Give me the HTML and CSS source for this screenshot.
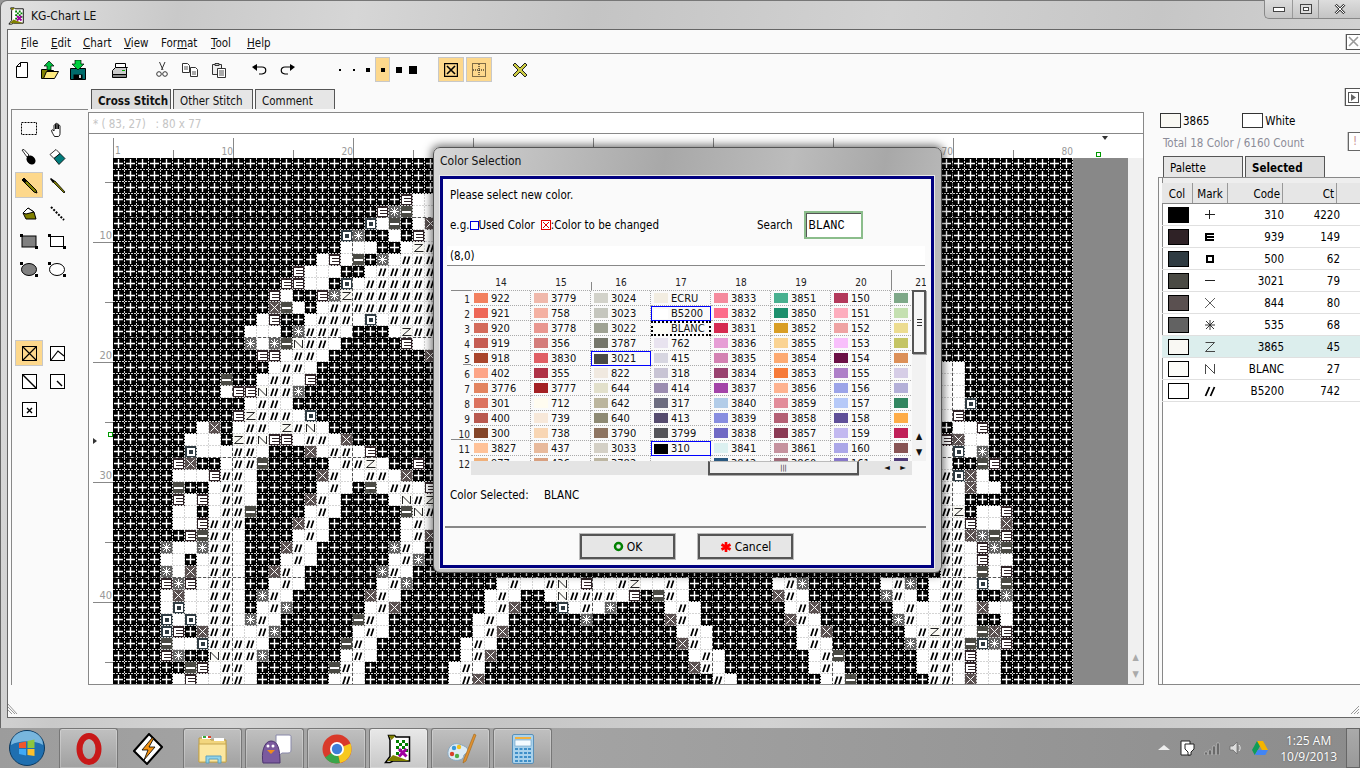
FILE: index.html
```html
<!DOCTYPE html>
<html lang="en">
<head>
<meta charset="utf-8">
<title>KG-Chart LE</title>
<link rel="stylesheet" href="styles.css">
</head>
<body>
<svg class="defs" width="0" height="0" aria-hidden="true">
  <symbol id="kg" viewBox="0 0 20 20">
    <path d="M3 1h4l1 1h9v16H6l-2 1H1l3-4V4z" fill="#fff" stroke="#000"/>
    <path d="M2 18l4-4 11 4H6z" fill="#808000"/>
    <path d="M3 1h4v1L5 4z" fill="#808000"/>
    <path d="M8 4h2v2H8zM12 4h2v2h-2zM10 6h2v2h-2zM14 6h2v2h-2zM8 8h2v2H8zM12 8h2v2h-2zM10 10h2v2h-2zM14 10h2v2h-2zM8 12h2v2H8z" fill="#008000"/>
    <path d="M10 10l5 5M15 10l-5 5" stroke="#a000a0" stroke-width="2"/>
  </symbol>
</svg>

<div class="window">
  <div class="titlebar">
    <svg class="app-icon" width="18" height="18"><use href="#kg"/></svg>
    <span class="app-title">KG-Chart LE</span>
    <div class="caption">
      <span class="cap-btn cap-min"><svg width="12" height="8"><rect x=".5" y="2.5" width="11" height="4" fill="#fff" stroke="#444"/></svg></span>
      <span class="cap-btn cap-max"><svg width="12" height="10"><rect x=".5" y=".5" width="11" height="9" fill="#ddd" stroke="#444"/><rect x="3.5" y="3.5" width="5" height="3" fill="#fff" stroke="#444"/></svg></span>
      <span class="cap-btn cap-close"><svg width="12" height="10"><path d="M1.5 .5l9 9M10.5 .5l-9 9" stroke="#444" stroke-width="2.6"/><path d="M1.5 .5l9 9M10.5 .5l-9 9" stroke="#fff" stroke-width="1"/></svg></span>
    </div>
  </div>

  <div class="client">
    <div class="menubar">
      <span class="menu-item m-file"><u>F</u>ile</span>
      <span class="menu-item m-edit"><u>E</u>dit</span>
      <span class="menu-item m-chart"><u>C</u>hart</span>
      <span class="menu-item m-view"><u>V</u>iew</span>
      <span class="menu-item m-format">For<u>m</u>at</span>
      <span class="menu-item m-tool"><u>T</u>ool</span>
      <span class="menu-item"><u>H</u>elp</span>
      <span class="menu-close"><svg width="11" height="11"><path d="M1 1l9 9M10 1l-9 9" stroke="#999" stroke-width="1.6"/></svg></span>
    </div>

    <div class="toolbar">
      <span class="tb"><svg width="16" height="18"><path d="M2.500 5.500l4-4h7v15h-11zM2.500 5.500h4v-4" fill="#fff" stroke="#000"/></svg></span>
      <span class="tb"><svg width="20" height="20"><path d="M1.500 9.500h5l1 1h6v8h-12z" fill="#808000" stroke="#000"/><path d="M3.500 18.500l3-7h12l-4 7z" fill="#ffeb80" stroke="#000"/><path d="M9 1l5 5h-3v4H7V6H4z" fill="#00c040" stroke="#000" stroke-width=".7"/></svg></span>
      <span class="tb"><svg width="16" height="20"><path d="M.5 8.500h15v11H.5z" fill="#006b6b" stroke="#000"/><path d="M3.500 14.500h9v5h-9z" fill="#000"/><path d="M9 15h2v3H9z" fill="#ccc"/><path d="M5 0h6v4h3l-6 6-6-6h3z" fill="#00d040" stroke="#000" stroke-width=".7"/></svg></span>
      <span class="tb tb-sp14"><svg width="18" height="16"><path d="M4.500 1.500h10v4h-10z" fill="#fff" stroke="#000"/><path d="M4.500 5.500h12l-1 1v6h-14v-4z" fill="#ccc" stroke="#000"/><path d="M1.500 12.500h14v3h-14z" fill="#888" stroke="#000"/><path d="M11 8.500h3" stroke="#0a0"/></svg></span>
      <span class="tb tb-sp14"><svg width="12" height="17"><path d="M3.500 1l3.500 8M9 1l-3.500 8" stroke="#333" fill="none"/><circle cx="3" cy="13" r="2.300" fill="#fff" stroke="#333"/><circle cx="9" cy="13" r="2.300" fill="#fff" stroke="#333"/></svg></span>
      <span class="tb"><svg width="18" height="14"><path d="M1.500 .5h5l2 2v7h-7z" fill="#fff" stroke="#333"/><path d="M9.500 4.500h5l2 2v7h-7z" fill="#fff" stroke="#333"/><path d="M3 4h4M3 6h4M11 9h4M11 11h4" stroke="#555"/></svg></span>
      <span class="tb"><svg width="15" height="16"><path d="M1.500 2.500h9v10h-9z" fill="#eee" stroke="#333"/><path d="M4 1.500h4v2H4z" fill="#ccc" stroke="#333"/><path d="M6.500 6.500h8v9h-8z" fill="#fff" stroke="#333"/><path d="M8 9h5M8 11h5M8 13h5" stroke="#555"/></svg></span>
      <span class="tb tb-sp13"><svg width="15" height="11"><path d="M4 3h6c5 0 5 6 0 7H7" fill="none" stroke="#000" stroke-width="1.200"/><path d="M5 0v7L0 3z" fill="#000"/></svg></span>
      <span class="tb"><svg width="15" height="11"><path d="M11 3H5c-5 0-5 6 0 7h3" fill="none" stroke="#000" stroke-width="1.200"/><path d="M10 0v7l5-4z" fill="#000"/></svg></span>
      <span class="size size-first"><i class="dot d1"></i></span>
      <span class="size"><i class="dot d1"></i></span>
      <span class="size"><i class="dot d2"></i></span>
      <span class="size size-on"><i class="dot d3"></i></span>
      <span class="size size-gap"><i class="dot d4"></i></span>
      <span class="size"><i class="dot d5"></i></span>
      <span class="toggle toggle-first"><svg width="14" height="14"><rect x=".5" y=".5" width="13" height="13" fill="none" stroke="#000" stroke-width="1.400"/><path d="M3 3l8 8M11 3l-8 8" stroke="#000" stroke-width="1.600"/></svg></span>
      <span class="toggle"><svg width="14" height="14"><rect x=".5" y=".5" width="13" height="13" fill="none" stroke="#000" stroke-dasharray="1 1"/><path d="M7 1v12M1 7h12" stroke="#000" stroke-dasharray="1 1"/></svg></span>
      <span class="tb tb-sp14"><svg width="16" height="16"><path d="M3 1l5 5 5-5 2 2-5 5 5 5-2 2-5-5-5 5-2-2 5-5-5-5z" fill="#cccc44" stroke="#222"/></svg></span>
    </div>

    <div class="tabs-row">
      <span class="tab tab-on">Cross Stitch</span>
      <span class="tab">Other Stitch</span>
      <span class="tab">Comment</span>
      <span class="pane-btn"><svg width="11" height="11"><rect x=".5" y=".5" width="10" height="10" fill="#fff" stroke="#555"/><path d="M3 2l5 3.500-5 3.500z" fill="#666"/></svg></span>
    </div>

    <div class="main">
      <aside class="tools">
        <span class="tool"><svg width="17" height="14"><rect x=".5" y=".5" width="15" height="12" fill="none" stroke="#000" stroke-dasharray="2 1"/></svg></span>
        <span class="tool"><svg width="12" height="15"><path d="M3.500 14.500C2 12 1 10.500 .6 8.800c-.2-1 1-1.500 1.800-.5L3 9V3.500c0-1 1.500-1 1.500 0V7 2c0-1 1.500-1 1.500 0v5-4.500c0-1 1.500-1 1.500 0V7 4c0-1 1.500-1 1.500 0v7.500c0 2-1 3-2 3z" fill="#fff" stroke="#000" stroke-width=".9"/></svg></span>
        <span class="tool"><svg width="16" height="17"><path d="M1 1l2-0.500L8 6l-2 2z" fill="#fff" stroke="#000" stroke-width=".8"/><ellipse cx="10" cy="11" rx="4" ry="5" transform="rotate(-45 10 11)" fill="#000"/></svg></span>
        <span class="tool"><svg width="17" height="17"><path d="M1 5.500l6-5 4 4-6 5z" fill="#fff" stroke="#000" stroke-width=".8"/><path d="M5 9.500l6-5 5 5-6 6z" fill="#007b7b" stroke="#000" stroke-width=".8"/></svg></span>
        <span class="tool tool-on"><svg width="17" height="17"><path d="M1 3l2-2 12 12 1 3-3-1z" fill="#808000" stroke="#000"/><path d="M1 3l2-2 3 3-2 2z" fill="#000"/></svg></span>
        <span class="tool"><svg width="17" height="17"><path d="M1 2l1-1 4 3-2 2z" fill="#000"/><path d="M4 5l2-1 10 11-1 1z" fill="#808000" stroke="#000" stroke-width=".8"/></svg></span>
        <span class="tool"><svg width="17" height="15"><path d="M2 7l5-5 6 4 2 7H5z" fill="#808000" stroke="#000"/><path d="M2 7l5-5 6 4-8 2z" fill="#fff" stroke="#000"/></svg></span>
        <span class="tool"><svg width="17" height="17"><path d="M2 2l13 13" stroke="#000" stroke-width="2" stroke-dasharray="2 1.400"/></svg></span>
        <span class="tool"><svg width="18" height="15"><rect x="2" y="2" width="14" height="11" fill="#808080" stroke="#000"/><path d="M0 0h3v3H0zM15 12h3v3h-3z" fill="#000"/></svg></span>
        <span class="tool"><svg width="18" height="15"><rect x="2.500" y="2.500" width="13" height="10" fill="#fff" stroke="#000"/><path d="M0 0h3v3H0zM15 12h3v3h-3z" fill="#000"/></svg></span>
        <span class="tool"><svg width="18" height="15"><ellipse cx="9" cy="7.500" rx="7.500" ry="6" fill="#808080" stroke="#000"/><path d="M0 0h3v3H0zM15 12h3v3h-3z" fill="#000"/></svg></span>
        <span class="tool"><svg width="18" height="15"><ellipse cx="9" cy="7.500" rx="7.500" ry="6" fill="#fff" stroke="#000"/><path d="M0 0h3v3H0zM15 12h3v3h-3z" fill="#000"/></svg></span>
        <span class="tool-gap"></span>
        <span class="tool tool-on tool-on-wide"><svg width="15" height="15"><rect x=".5" y=".5" width="14" height="14" fill="none" stroke="#000"/><path d="M1 1l13 13M14 1L1 14" stroke="#000" stroke-width="1.200"/></svg></span>
        <span class="tool"><svg width="15" height="15"><rect x=".5" y=".5" width="14" height="14" fill="#fff" stroke="#000"/><path d="M1 14l7-9 6 5" fill="none" stroke="#000" stroke-width="1.200"/></svg></span>
        <span class="tool"><svg width="15" height="15"><rect x=".5" y=".5" width="14" height="14" fill="#fff" stroke="#000"/><path d="M1 1l13 13" stroke="#000" stroke-width="1.400"/></svg></span>
        <span class="tool"><svg width="15" height="15"><rect x=".5" y=".5" width="14" height="14" fill="#fff" stroke="#000"/><path d="M7 7l5 5" stroke="#000" stroke-width="1.400"/></svg></span>
        <span class="tool"><svg width="15" height="15"><rect x=".5" y=".5" width="14" height="14" fill="#fff" stroke="#000"/><path d="M5 6l5 5M10 6l-5 5" stroke="#000" stroke-width="1.400"/></svg></span>
      </aside>

      <section class="chart-panel">
        <div class="coords">* ( 83, 27)&nbsp;&nbsp; : 80 x 77</div>
        <div class="chart-grid">
          <div class="corner"></div>
          <div class="col-ruler">
            <span class="col-first">1</span>
            <span class="col-label">10</span><span class="col-label">20</span><span class="col-label col-hidden"></span><span class="col-label col-hidden"></span><span class="col-label col-hidden"></span><span class="col-label col-hidden"></span><span class="col-label">70</span><span class="col-label">80</span>
            <i class="mark-tri-top"></i>
            <i class="mark-green mark-green-top"></i>
          </div>
          <div class="top-filler"></div>
          <div class="row-ruler">
            <span class="row-label row-label-first">10</span><span class="row-label">20</span><span class="row-label">30</span><span class="row-label">40</span>
            <i class="mark-tri-left"></i>
            <i class="mark-green mark-green-left"></i>
          </div>
          <svg id="stitches" class="stitches" width="960" height="526"></svg>
          <div class="chart-gutter"></div>
          <div class="chart-vscroll">
            <span class="scroll-arrow">▲</span>
            <span class="scroll-arrow">▼</span>
          </div>
        </div>
      </section>

      <aside class="side">
        <div class="legend">
          <span class="legend-swatch legend-a"></span><span class="legend-text">3865</span>
          <span class="legend-swatch legend-b"></span><span class="legend-text">White</span>
        </div>
        <div class="total-row">
          <span class="total">Total 18 Color / 6160 Count</span>
          <span class="bang">!</span>
        </div>
        <div class="side-tabs">
          <span class="side-tab">Palette</span>
          <span class="side-tab side-tab-on">Selected</span>
        </div>
        <div class="list-frame">
          <div class="list-head">
            <span class="lh lh-col">Col</span>
            <span class="lh lh-mark">Mark</span>
            <span class="lh lh-code">Code</span>
            <span class="lh lh-ct">Ct</span>
          </div>
          <div class="list-row"><span class="lc-sw"><i class="sw" style="background:#000"></i></span><span class="lc-mark"><svg width="12" height="12"><path d="M1 5.500h10M5.500 1v9" stroke="#222"/></svg></span><span class="lc-code">310</span><span class="lc-ct">4220</span></div>
          <div class="list-row"><span class="lc-sw"><i class="sw" style="background:#2f2226"></i></span><span class="lc-mark"><svg width="12" height="12"><path d="M1 2h9v2H3v1h7v2H3v1h7v2H1z" fill="#000"/></svg></span><span class="lc-code">939</span><span class="lc-ct">149</span></div>
          <div class="list-row"><span class="lc-sw"><i class="sw" style="background:#2f3b42"></i></span><span class="lc-mark"><svg width="12" height="12"><path d="M2 2h8v8H2zM4 4v4h4V4z" fill="#000" fill-rule="evenodd"/></svg></span><span class="lc-code">500</span><span class="lc-ct">62</span></div>
          <div class="list-row"><span class="lc-sw"><i class="sw" style="background:#4a4a44"></i></span><span class="lc-mark"><svg width="12" height="12"><path d="M1 5.500h10" stroke="#222"/></svg></span><span class="lc-code">3021</span><span class="lc-ct">79</span></div>
          <div class="list-row"><span class="lc-sw"><i class="sw" style="background:#5a5050"></i></span><span class="lc-mark"><svg width="12" height="12"><path d="M1 1l10 10M11 1L1 11" stroke="#333" stroke-width=".8"/></svg></span><span class="lc-code">844</span><span class="lc-ct">80</span></div>
          <div class="list-row"><span class="lc-sw"><i class="sw" style="background:#626262"></i></span><span class="lc-mark"><svg width="12" height="12"><path d="M1 6h10M6 1v10M2 2l8 8M10 2l-8 8" stroke="#222" stroke-width=".9"/></svg></span><span class="lc-code">535</span><span class="lc-ct">68</span></div>
          <div class="list-row list-row-on"><span class="lc-sw"><i class="sw" style="background:#f9f8f3"></i></span><span class="lc-mark"><svg width="12" height="12"><path d="M1.500 1.500h9l-9 9h9.500" fill="none" stroke="#333" stroke-width=".9"/></svg></span><span class="lc-code">3865</span><span class="lc-ct">45</span></div>
          <div class="list-row"><span class="lc-sw"><i class="sw" style="background:#fcfcf8"></i></span><span class="lc-mark"><svg width="12" height="12"><path d="M1.500 11V1.500l9 9V1" fill="none" stroke="#333" stroke-width=".9"/></svg></span><span class="lc-code">BLANC</span><span class="lc-ct">27</span></div>
          <div class="list-row"><span class="lc-sw"><i class="sw" style="background:#fff"></i></span><span class="lc-mark"><svg width="12" height="12"><path d="M1.500 11l4-9M6.500 11l4-9" stroke="#000" stroke-width="1.800"/></svg></span><span class="lc-code">B5200</span><span class="lc-ct">742</span></div>
        </div>
      </aside>
    </div>

    <div class="statusbar">
      <svg class="grip" width="10" height="12"><path d="M0 1l9 10M0 4l7 7M0 7l4 4" stroke="#999"/></svg>
      <svg class="grip" width="9" height="9"><path d="M8 0L0 8M8 3L3 8M8 6L6 8" stroke="#999"/></svg>
    </div>
  </div>
</div>

<div class="dialog">
  <div class="dialog-title">Color Selection</div>
  <div class="dialog-body">
    <div class="msg">Please select new color.</div>
    <div class="eg-row">
      <span>e.g.</span><i class="eg-blue"></i><span>Used Color</span>
      <svg class="eg-red" width="10" height="10"><rect x=".5" y=".5" width="9" height="9" fill="#fff" stroke="#e00000"/><path d="M2 2l6 6M8 2l-6 6" stroke="#e00000"/></svg>
      <span>:Color to be changed</span>
      <span class="search-label">Search</span>
      <span class="search-input">BLANC</span>
    </div>
    <div class="coord-strip">(8,0)</div>
    <div class="pal-head" id="palHead"></div>
    <div class="pal-wrap">
      <div class="pal-rows" id="palRows"></div>
      <div class="pal-view">
        <div class="pal-cells" id="palCells"></div>
        <div class="hscroll">
          <span class="hthumb"><b>|||</b></span>
          <span class="harrow">◄</span><span class="harrow">►</span>
        </div>
      </div>
      <div class="vscroll">
        <span class="vthumb"><i></i><i></i><i></i></span>
        <span class="varrow">▲</span><span class="varrow">▼</span>
      </div>
    </div>
    <div class="selected-row"><span class="sel-label">Color Selected:</span><span>BLANC</span></div>
    <div class="button-row">
      <span class="dlg-btn"><svg width="11" height="11"><circle cx="5.500" cy="5.500" r="3.500" fill="none" stroke="#008000" stroke-width="2.500"/></svg>OK</span>
      <span class="dlg-btn dlg-btn-cancel"><svg width="12" height="12"><path d="M6 1v10M1.500 3.500l9 5M10.500 3.500l-9 5" stroke="#f00" stroke-width="2.600"/></svg>Cancel</span>
    </div>
  </div>
</div>

<div class="taskbar">
  <span class="start"><svg width="38" height="38" viewBox="0 0 38 38">
    <circle cx="19" cy="19" r="17.500" fill="#1f6fb0" stroke="#0c3a60"/>
    <path d="M3 16a16 14 0 0 1 32 0c-8-5-24-5-32 0z" fill="#8fc8ea" opacity=".8"/>
    <path d="M11 14l7-1.500v6.500h-7z" fill="#f0562c"/><path d="M19.500 12l7 -1.500 0 8.500h-7z" fill="#8cc63f"/>
    <path d="M11 20h7v6.500l-7-1.500z" fill="#3fa9f5"/><path d="M19.500 20h7v7l-7-1z" fill="#fbc02d"/>
  </svg></span>
  <span class="task task-first"><svg width="26" height="32"><ellipse cx="13" cy="16" rx="9.500" ry="13" fill="none" stroke="#c81818" stroke-width="6"/></svg></span>
  <span class="task task-plain"><svg width="30" height="32"><path d="M16 1L29 14 14 31 1 18z" fill="#fff" stroke="#000" stroke-width="2"/><path d="M19 5L9 17h6l-4 10 11-13h-6l5-9z" fill="#f29111" stroke="#000" stroke-width=".8"/></svg></span>
  <span class="task"><svg width="32" height="32"><path d="M2 5h10l2 2h15v22H2z" fill="#f2d67e" stroke="#b89a48"/><path d="M5 3h9v3H5z" fill="#fff"/><path d="M6 3h3v2H6z" fill="#35a83c"/><path d="M11 3h3v2h-3z" fill="#d9402a"/><path d="M17 5h10v3H17z" fill="#fff"/><path d="M2 11h27v18H2z" fill="#fbe7a0" stroke="#c8a850"/><path d="M9 30v-7h15v7h-3v-4h-9v4z" fill="#8fd3ea" stroke="#5aa0c0"/></svg></span>
  <span class="task"><svg width="34" height="32"><path d="M18 2h13c2 0 2 1 2 2v13c0 2-1 3-3 3h-6l-5 4v-4h-1z" fill="#fff" stroke="#88a"/><path d="M5 30c-2-10 1-22 8-22s9 8 9 22z" fill="#7b5a9e" stroke="#4c3570"/><circle cx="10" cy="13" r="1.500" fill="#fff"/><circle cx="15" cy="13" r="1.500" fill="#fff"/><path d="M9 17h8l-4 4z" fill="#f08a1c"/></svg></span>
  <span class="task"><svg width="32" height="32" viewBox="0 0 32 32"><circle cx="16" cy="16" r="14.500" fill="#d93a2b"/><path d="M16 16L4 24.500A14.500 14.500 0 0 0 19 30z" fill="#3aa54a"/><path d="M16 16l13.500-5.500A14.500 14.500 0 0 1 19 30z" fill="#f7c81e"/><circle cx="16" cy="16" r="7" fill="#fff"/><circle cx="16" cy="16" r="5.200" fill="#3f7ed8"/></svg></span>
  <span class="task task-on"><svg width="30" height="36"><use href="#kg"/></svg></span>
  <span class="task"><svg width="32" height="32"><path d="M14 11C7 9 2 15 3 22c1 5 9 7 14 4 2-1 1-4 3-5 3-1 4-3 2-6-2-2-5-3-8-4z" fill="#dcebf5" stroke="#88a8c0"/><circle cx="9" cy="15" r="2.200" fill="#3a9ad9"/><circle cx="7" cy="21" r="2.200" fill="#d9402a"/><circle cx="14" cy="14" r="2.200" fill="#f2c21c"/><circle cx="12" cy="23" r="2.200" fill="#4fae4a"/><path d="M29 1l2 1-10 26-3 2 1-4z" fill="#e09030" stroke="#a06818" stroke-width=".6"/></svg></span>
  <span class="task"><svg width="24" height="32"><rect x="1.500" y="1.500" width="21" height="29" rx="1.500" fill="#a9d2ec" stroke="#5a90b8"/><rect x="4" y="4" width="16" height="2" fill="#f0b040"/><rect x="4" y="7" width="16" height="6" fill="#f4fbff" stroke="#6a9cc0" stroke-width=".6"/><path d="M4 15h3v2H4zM8.500 15h3v2h-3zM13 15h3v2h-3zM17 15h3v2h-3zM4 19h3v2H4zM8.500 19h3v2h-3zM13 19h3v2h-3zM17 19h3v2h-3zM4 23h3v2H4zM8.500 23h3v2h-3zM13 23h3v2h-3zM17 23h3v2h-3zM4 27h3v2H4zM8.500 27h3v2h-3zM13 27h3v2h-3zM17 27h3v2h-3z" fill="#3f8fc8"/></svg></span>
  <div class="tray">
    <svg width="12" height="8"><path d="M6 1l6 5H0z" fill="#eee"/></svg>
    <svg width="16" height="18"><path d="M2 2h9v14H2z" fill="#fff" stroke="#222"/><path d="M6 5h9v5l-3 3v3H9v-3L6 10z" fill="#fff" stroke="#222"/></svg>
    <svg width="16" height="13"><path d="M1 10h2v3H1zM5 8h2v5H5zM9 4h2v9H9zM13 1h2v12h-2z" fill="#444" stroke="#ddd" stroke-width=".5"/></svg>
    <svg width="14" height="14"><path d="M1 5h3l4-4v12L4 9H1z" fill="#ddd" stroke="#666" stroke-width=".7"/><path d="M10 4c1.500 2 1.500 4 0 6" stroke="#eee" fill="none"/></svg>
    <svg width="16" height="14" viewBox="0 0 16 14"><path d="M5 0h6L5.500 9.500 2.700 14 0 9z" fill="#0f9d58"/><path d="M5 0h6l5 9h-6z" fill="#f4b400"/><path d="M3 14l2.700-5H16l-2.700 5z" fill="#4285f4"/></svg>
    <div class="clock"><span>1:25 AM</span><span>10/9/2013</span></div>
    <span class="show-desktop"></span>
  </div>
</div>

<script src="script.js"></script>
</body>
</html>
```
FILE: styles.css
```css
* { box-sizing: border-box; }
html, body { margin: 0; padding: 0; }
body {
  width: 1360px; height: 768px; overflow: hidden; position: relative;
  font: 11.5px/16px "DejaVu Sans Condensed", "DejaVu Sans", sans-serif; color: #000;
  background: #999;
}
.defs { position: absolute; }
.window {
  height: 728px;
  background: linear-gradient(100deg, #e2e2e2 0, #c9c9c9 12%, #d6d6d6 24%, #c4c4c4 40%, #d2d2d2 60%, #c6c6c6 78%, #d8d8d8 100%);
  border-radius: 7px 0 0 0;
  border-top: 1px solid #777;
  border-left: 1px solid #666;
  padding: 0 0 10px 6px;
  display: flex; flex-direction: column;
}
.titlebar { height: 28px; display: flex; align-items: flex-start; flex: none; }
.app-icon { margin: 6px 0 0 1px; }
.app-title { margin: 7px 0 0 5px; color: #111; line-height: 16px; font-size: 12px; }
.caption { margin-left: auto; display: flex; height: 19px; margin-top: -1px; border: 1px solid #888; border-top: 0; border-right: 0; border-radius: 0 0 0 5px; background: linear-gradient(#ddd, #c4c4c4); }
.cap-btn { display: flex; align-items: center; justify-content: center; border-right: 1px solid #999; }
.cap-min { width: 28px; } .cap-max { width: 26px; } .cap-close { width: 41px; border-right: 0; }
.client { flex: 1; background: #fafafa; border: 1px solid #666; border-right: 0; display: flex; flex-direction: column; min-height: 0; }

.menubar { height: 24px; border-bottom: 1px solid #888; display: flex; align-items: center; padding: 2px 0 0 13px; flex: none; }
.menu-item { color: #111; white-space: nowrap; }
.m-file { width: 30px; } .m-edit { width: 32px; } .m-chart { width: 41px; } .m-view { width: 37px; } .m-format { width: 50px; } .m-tool { width: 36px; }
.menu-item u { text-decoration: underline; }
.menu-close { margin-left: auto; margin-top: -2px; width: 14px; height: 16px; border: 1px solid #555; border-right: 0; display: flex; align-items: center; justify-content: center; background: #fff; box-shadow: -1px 0 0 #ccc; }

.toolbar { height: 35px; padding: 3px 0 0 0; display: flex; align-items: flex-start; flex: none; }
.tb { width: 28px; height: 25px; display: flex; align-items: center; justify-content: center; }
.tb-sp14 { margin-left: 14px; } .tb-sp13 { margin-left: 13px; }
.size { width: 14px; height: 25px; display: flex; align-items: center; justify-content: center; }
.size-first { margin-left: 32px; }
.size-on { background: #fdd88c; border: 1px solid #c8c8c8; width: 15px; }
.size-gap { margin-left: 2px; }
.dot { display: block; background: #000; }
.d1 { width: 2px; height: 2px; } .d2 { width: 4px; height: 4px; } .d3 { width: 4px; height: 4px; } .d4 { width: 6px; height: 6px; } .d5 { width: 8px; height: 8px; }
.toggle { width: 26px; height: 25px; background: #fdd88c; border: 1px solid #c8c8c8; margin-left: 2px; display: flex; align-items: center; justify-content: center; }
.toggle-first { margin-left: 18px; }

.tabs-row { height: 20px; display: flex; padding-left: 83px; flex: none; position: relative; }
.tab { width: 80px; height: 20px; margin-right: 2px; border: 1px solid #555; border-bottom: 0; background: #e6e6e6; padding: 3px 0 0 6px; color: #111; white-space: nowrap; }
.tab-on { background: #ddd; font-weight: bold; }
.pane-btn { position: absolute; right: 0; top: -1px; width: 15px; height: 18px; border: 1px solid #555; border-right: 0; background: #fff; display: flex; align-items: center; justify-content: center; box-shadow: -1px 0 0 #ccc; }

.main { height: 576px; display: flex; flex: none; }
.tools {
  width: 77px; margin-left: 3px; flex: none;
  border: 1px solid #888; border-right: 0; border-bottom: 0;
  padding: 5px 0 0 3px;
  display: grid; grid-template-columns: 28px 28px; grid-auto-rows: 28px; align-content: start;
}
.tool { width: 28px; height: 28px; display: flex; align-items: center; justify-content: center; }
.tool-on { background: #fdd88c; border: 1px solid #c8c8c8; width: 28px; height: 26px; margin-top: 1px; }
.tool-on-wide { margin-left: 0; }
.tool-gap { grid-column: 1 / 3; height: 56px; grid-row: span 2; }

.chart-panel { width: 1056px; flex: none; margin-top: 3px; border: 1px solid #888; background: #fff; display: flex; flex-direction: column; }
.coords { height: 21px; border-bottom: 1px solid #888; color: #c4c4c4; padding: 3px 0 0 4px; flex: none; }
.chart-grid { flex: 1; display: grid; grid-template-columns: 24px 960px 55px 15px; grid-template-rows: 24px 526px; min-height: 0; overflow: hidden; }
.corner { background: #fff; }
.col-ruler {
  position: relative; display: flex;
  background:
    linear-gradient(to right, #888 1px, transparent 1px) 0 100% / 120px 20px repeat-x,
    linear-gradient(to right, #888 1px, transparent 1px) 60px 100% / 120px 8px repeat-x;
  color: #999; font-size: 10px; line-height: 12px;
}
.col-first { position: absolute; left: 2px; bottom: 1px; }
.col-label { width: 120px; flex: none; text-align: right; padding-top: 12px; }
.top-filler { grid-column: 3 / 5; background: #fff; }
.row-ruler {
  position: relative; display: flex; flex-direction: column;
  background:
    linear-gradient(#888 1px, transparent 1px) 4px 84px / 20px 120px repeat-y,
    linear-gradient(#888 1px, transparent 1px) 16px 24px / 8px 120px repeat-y;
  background-color: #fff;
  color: #999; font-size: 11px; line-height: 12px; text-align: right;
}
.row-label { height: 120px; flex: none; display: flex; align-items: flex-end; justify-content: flex-end; padding-right: 1px; }
.row-label-first { height: 84px; }
.stitches { display: block; background: #fff; }
.chart-gutter { background: #888; }
.chart-vscroll { background: #f0f0f0; display: flex; flex-direction: column; justify-content: flex-end; align-items: center; color: #aaa; font-size: 9px; line-height: 17px; padding-bottom: 1px; }
.mark-tri-top { position: absolute; left: 989px; top: 2px; border: 3px solid transparent; border-top: 4px solid #333; border-bottom: 0; }
.mark-green { position: absolute; width: 5px; height: 5px; border: 1px solid #090; background: #fff; }
.mark-green-top { left: 983px; top: 18px; }
.mark-tri-left { position: absolute; left: 4px; top: 280px; border: 3px solid transparent; border-left: 4px solid #333; border-right: 0; }
.mark-green-left { left: 19px; top: 274px; }

.side { width: 202px; margin-left: 14px; flex: none; display: flex; flex-direction: column; }
.legend { height: 17px; margin-top: 3px; display: flex; align-items: center; padding-left: 2px; }
.legend-swatch { width: 21px; height: 15px; border: 1px solid #333; flex: none; }
.legend-a { background: #f9f8f3; }
.legend-b { background: #fff; margin-left: 33px; }
.legend-text { margin-left: 2px; }
.total-row { height: 20px; margin-top: 3px; padding: 3px 0 0 5px; display: flex; }
.total { color: #8c8c98; white-space: nowrap; }
.bang { margin-left: auto; width: 12px; height: 19px; margin-top: -3px; border: 1px solid #666; border-right: 0; color: #c89090; padding-left: 4px; background: #fff; box-shadow: -1px 0 0 #ccc; }
.side-tabs { height: 21px; margin-top: 4px; padding-left: 5px; display: flex; flex: none; }
.side-tab { width: 80px; margin-right: 2px; height: 21px; border: 1px solid #555; border-bottom: 0; background: #e6e6e6; padding: 3px 0 0 6px; }
.side-tab-on { background: #ddd; font-weight: bold; }
.list-frame { flex: 1; border: 1px solid #888; border-right: 0; padding: 5px 0 0 3px; background: #fff; box-shadow: inset 3px 0 0 #fafafa, inset 4px 0 0 #888, inset 0 5px 0 #eee; }
.list-head { height: 21px; display: flex; background: #e6e6e6; border-bottom: 1px solid #888; }
.lh { height: 20px; border-left: 1px solid #999; padding-top: 3px; flex: none; }
.lh-col { width: 30px; text-align: center; border-left: 0; }
.lh-mark { width: 35px; text-align: center; }
.lh-code { width: 55px; text-align: right; padding-right: 2px; }
.lh-ct { width: 55px; text-align: right; padding-right: 2px; border-right: 1px solid #999; }
.list-row { height: 22px; display: flex; align-items: center; border-bottom: 1px solid #e0e0e0; padding-left: 3px; }
.list-row-on { background: #dceeed; }
.lc-sw { width: 26px; flex: none; display: flex; align-items: center; justify-content: center; }
.sw { display: block; width: 21px; height: 16px; border: 1px solid #000; }
.lc-mark { width: 36px; flex: none; display: flex; justify-content: center; margin-left: 1px; }
.lc-code { width: 56px; flex: none; text-align: right; }
.lc-ct { width: 56px; flex: none; text-align: right; }

.statusbar { flex: 1; display: flex; justify-content: space-between; align-items: flex-end; padding: 0 0 2px 0; background: #fafafa; }
.grip { display: block; }

.dialog {
  position: absolute; left: 433px; top: 147px; width: 509px; height: 426px;
  border: 1px solid #555; border-radius: 7px;
  background: linear-gradient(100deg, #d8d8d8 0, #c4c4c4 14%, #a8a8a8 40%, #bcbcbc 62%, #a8a8a8 78%, #c8c8c8 100%);
  box-shadow: 0 0 9px 2px rgba(0,0,0,.55);
  padding: 0 7px 4px 6px;
  display: flex; flex-direction: column;
}
.dialog-title { height: 28px; padding: 5px 0 0 0; color: #111; flex: none; font-size: 12px; }
.dialog-body { flex: 1; background: #fafafa; border: 3px solid #000080; outline: 1px solid #e8e8e8; padding: 8px 0 0 0; display: flex; flex-direction: column; min-height: 0; }
.msg { height: 16px; padding-left: 7px; flex: none; }
.eg-row { height: 28px; margin-top: 8px; display: flex; align-items: center; padding-left: 7px; flex: none; white-space: nowrap; }
.eg-blue { width: 9px; height: 9px; border: 1px solid #0000e0; background: #fff; display: block; flex: none; }
.eg-red { margin-left: 6px; flex: none; }
.search-label { margin-left: 98px; }
.search-input { margin-left: 11px; width: 59px; height: 28px; border: 2px solid #8bbd8b; box-shadow: inset 1px 1px 0 #555; background: #fff; font: 12px/26px "Liberation Mono", monospace; padding-left: 3px; }
.coord-strip { height: 20px; margin: 7px 6px 0 4px; background: #fff; border-bottom: 1px solid #888; padding: 2px 0 0 3px; flex: none; }
.pal-head {
  height: 24px; margin-left: 28px; width: 455px; display: flex; overflow: hidden; flex: none;
  font-size: 10px; line-height: 12px; align-items: flex-end; padding-bottom: 1px; position: relative;
}
.pal-col { width: 60px; flex: none; text-align: center; color: #222; }
.pal-tick { position: absolute; bottom: 0; width: 1px; background: #888; }
.pal-tick-a { left: 120px; height: 8px; } .pal-tick-b { left: 420px; height: 20px; }
.pal-wrap { display: flex; height: 185px; flex: none; }
.pal-rows { width: 28px; flex: none; font-size: 10px; line-height: 12px; color: #222; position: relative; }
.pal-rows-lab { height: 15px; text-align: right; padding: 4px 1px 0 0; }
.pal-rows-lab.t5 { border-bottom: 1px solid #888; margin-left: 20px; }
.pal-rows-lab.t10 { border-bottom: 1px solid #888; margin-left: 8px; }
.pal-rows-lab.t0 { border-top: 1px solid #888; margin-left: 8px; padding-top: 3px; }
.pal-view { width: 441px; flex: none; display: flex; flex-direction: column; }
.pal-cells { height: 171px; overflow: hidden; flex: none; display: grid; grid-template-columns: repeat(8, 60px); grid-auto-rows: 15px; border-top: 1px dotted #aaa; }
.cell { display: flex; align-items: center; border-right: 1px dotted #aaa; border-bottom: 1px dotted #aaa; padding-left: 3px; font-size: 11px; line-height: 13px; color: #111; white-space: nowrap; height: 15px; }
.cell i { width: 14px; height: 10px; display: block; flex: none; margin-right: 3px; }
.cell.used { border: 1px solid #0000ff; padding-left: 2px; }
.cell.picked { border: 2px dotted #000; padding-left: 1px; }
.hscroll { height: 14px; background: #e4e4e4; display: flex; align-items: center; padding-left: 237px; font-size: 8px; color: #111; flex: none; }
.hthumb { width: 151px; height: 14px; border: 2px solid #555; border-top: 1px solid #bbb; background: #f0f0f0; display: flex; align-items: center; justify-content: center; font-size: 7px; box-shadow: 0 1px 0 #aaa; }
.hthumb b { font-weight: normal; }
.harrow { width: 16px; text-align: center; }
.harrow:nth-child(2) { margin-left: 20px; }
.vscroll { width: 14px; height: 171px; flex: none; background: #f2f2f2; display: flex; flex-direction: column; align-items: center; font-size: 9px; line-height: 16px; position: relative; }
.vthumb { width: 14px; height: 64px; border: 2px solid #555; background: #f6f6f6; display: flex; flex-direction: column; align-items: center; justify-content: center; gap: 2px; box-shadow: 1px 1px 0 #aaa; }
.vthumb i { width: 5px; height: 1px; background: #333; display: block; }
.varrow { color: #111; }
.varrow:nth-child(2) { margin-top: 74px; }
.selected-row { height: 16px; margin-top: 12px; padding-left: 7px; display: flex; flex: none; }
.sel-label { width: 94px; flex: none; }
.button-row { margin: 23px 5px 0 2px; border-top: 2px solid #888; padding: 6px 0 0 135px; display: flex; flex: none; }
.dlg-btn { width: 95px; height: 25px; border: 2px solid #555; background: #e6e6e6; box-shadow: 0 0 0 1px #bbb; display: flex; align-items: center; justify-content: center; gap: 3px; font-size: 12px; }
.dlg-btn-cancel { margin-left: 23px; }

.taskbar { height: 40px; position: absolute; left: 0; right: 0; top: 728px; background: linear-gradient(90deg, #9c9c9c 0, #a8a8a8 30%, #9c9c9c 60%, #8c8c8c 100%); display: flex; padding-left: 59px; }
.start { position: absolute; left: 8px; top: 1px; }
.task { width: 59px; height: 40px; margin-right: 3px; border: 1px solid #777; border-bottom: 0; border-radius: 3px 3px 0 0; background: linear-gradient(#c0c0c0, #a0a0a0); display: flex; align-items: center; justify-content: center; box-shadow: inset 0 0 0 1px rgba(255,255,255,.25); }
.task-first { margin-right: 0; }
.task-plain { border-color: transparent; background: none; box-shadow: none; margin-right: 6px; }
.task-on { background: linear-gradient(#e8e8e8, #c8c8c8); }
.tray { margin-left: auto; display: flex; align-items: center; gap: 9px; }
.clock { display: flex; flex-direction: column; align-items: center; color: #fff; font: 12px/16px "Open Sans", "Noto Sans", sans-serif; margin-left: 3px; padding-top: 1px; text-shadow: 0 0 2px rgba(0,0,0,.4); }
.show-desktop { width: 14px; height: 40px; border: 1px solid #666; background: linear-gradient(#aaa, #999); }
```
FILE: script.js
```js
// Cross-stitch chart: run-length rows, char + optional count, missing cells are "+".
var rows = [
"+80","+80","+80","+24E.3","+22E*-.2","+21O.-+.X","+19O*++.+E.","+19.3++.Z/",
"+17.E.-+*./3","+15E.3++./5","+14EE..+O./6","+13E.++E*Z/7","+13X-.+./9","+12.E++./3.O./4",
"+11.3+*/3.+3.Z//","+11*.*-N//.+5E..","+12EE.//.+8X","+13.//.+10","+9-++.//.E+","+9.EEN//*+",
"+11.//.+","+10EZ/3.O+","+7.X+.//.Z/N.+","+6.3+Z/NEE.//.X+","+6O.3//.+3X.//.E+",
"+5EX++.//-+5.//Z.++E+","+5.3E//.+5X/..//.X+","+5-++.//.+5./.+-.//.E","+5E.E.//.+4X/.+4.N/Z",
"+5..+.//-+4./.+5-N/","+5..E/3+4X/.+6./.","+6E-//.+4./.+6./X","+4*..*//.+3X/.+6*/.+",
"+4..+.//.+3./.+6./*+","+4*.X.//.++X/.+6*/.+",
"+4E*E.//.++./.+6./*+7./../N.E../Z../.+7./*+6./*+.//.O.-+5",
"+4.X..//.+*/.+6X/.+7./.++.N/4.E+-/.+7X/.+6*/.+.//.++*+5",
"+4.O..//.+./*+6./X+7./X+3O./.*+4./.+7./X+6./..//.X..+5",
"+4O.O.//.*/.+6-/.+7./.+6*+6X/.+7X/.+6*/..//.++.+5",
"+4OE+X//../*+6./.+7./X+14./.+7./X+6./Z//.-XE+5",
"+4-..O/4.+6-/.+7./.+15X/.+7./.+6*/4-O*E+5",
"+4E*++N/3*+6./.+7./X+16./.+7./-+6./3E..+6",
"+6-E.//.+6-/.+7./.+17X/.+7./.+6.//.E..+6",
"+5.E..//.+6./.+7./X+19/.+7./-+6//.X..+6"
];
// Cells right of the dialog (column 69 onwards) for the rows the dialog covers.
var right = {17:"..+9",18:"..+9",19:"..+9",20:"..O+8",21:".E+9",22:"+..E+7",23:"EX..+7",24:".O.*+7",
25:".++-E+6",26:"/OX.+7",27:"/.X..+6",28:"/.+9",29:"/Z+..E+5",30:"//E..X+5",31:"//X*-E+5",
32:"//.E*-+5",33:"//.E..+5",34:"//.-.E+5"};

function expand(s) {
  var out = [], m, re = /([^0-9])(\d*)/g;
  while ((m = re.exec(s))) { for (var i = 0, n = m[2] ? +m[2] : 1; i < n; i++) out.push(m[1]); }
  return out;
}
var fills = {"+":"#000",E:"#2f2226",O:"#2f3b42","-":"#4a4a44",X:"#5a5050","*":"#626262",Z:"#f9f8f3",N:"#fcfcf8","/":"#fff",".":"#fff"};
var bg = {}, fg = {plus:"",fill:"",white:"",whiteFill:"",black:"",slash:""};
function mark(ch, x, y) {
  switch (ch) {
    case "+": fg.plus += "M"+(x+1)+" "+(y+5.5)+"h9M"+(x+5.5)+" "+(y+1)+"v9"; break;
    case "-": fg.fill += "M"+(x+1)+" "+(y+5)+"h9v2h-9z"; break;
    case "X": fg.white += "M"+(x+1.5)+" "+(y+1.5)+"l8 8M"+(x+9.5)+" "+(y+1.5)+"l-8 8"; break;
    case "*": fg.white += "M"+(x+1)+" "+(y+5.5)+"h9M"+(x+5.5)+" "+(y+1)+"v9M"+(x+2)+" "+(y+2)+"l7 7M"+(x+9)+" "+(y+2)+"l-7 7"; break;
    case "E": fg.fill += "M"+(x+1)+" "+(y+2)+"h9v2h-7v1h7v2h-7v1h7v2h-9z"; break;
    case "O": fg.whiteFill += "M"+(x+2)+" "+(y+2)+"h8v8h-8zM"+(x+4)+" "+(y+4)+"v4h4v-4z"; break;
    case "Z": fg.black += "M"+(x+1.5)+" "+(y+2.5)+"h8l-8 7h9"; break;
    case "N": fg.black += "M"+(x+1.5)+" "+(y+10)+"V"+(y+2)+"l8 8V"+(y+2); break;
    case "/": fg.slash += "M"+(x+2)+" "+(y+10)+"l2.500-7.500M"+(x+6)+" "+(y+10)+"l2.500-7.500"; break;
  }
}
rows.forEach(function (s, r) {
  var cells = expand(s);
  while (cells.length < 80) cells.push("+");
  if (right[r]) { var rc = expand(right[r]); for (var i = 0; i < rc.length; i++) cells[69 + i] = rc[i]; }
  cells.slice(0, 80).forEach(function (ch, c) {
    var x = c * 12, y = r * 12;
    var col = fills[ch];
    bg[col] = (bg[col] || "") + "M"+x+" "+y+"h12v12h-12z";
    mark(ch, x, y);
  });
});
var svgMarkup = "";
Object.keys(bg).forEach(function (c) { svgMarkup += '<path d="'+bg[c]+'" fill="'+c+'" shape-rendering="crispEdges"/>'; });
var gv = "", gh = "", dv = "", dh = "";
for (var c = 0; c < 80; c++) gv += "M"+(c*12+11.5)+" 0v526";
for (var r = 0; r < 44; r++) gh += "M0 "+(r*12+11.5)+"h960";
for (var r2 = 5; r2 < 44; r2 += 10) dh += "M0 "+(r2*12-.5)+"h960";
for (var c2 = 10; c2 < 80; c2 += 10) dv += "M"+(c2*12-.5)+" 0v526";
svgMarkup += '<path d="'+gv+gh+'" stroke="#d4d4d4" stroke-dasharray="2 1" fill="none"/>';
svgMarkup += '<path d="'+dv+dh+'" stroke="#555" stroke-dasharray="3 2" fill="none"/>';
svgMarkup += '<path d="'+fg.plus+'" stroke="#fff" stroke-width="1.400" fill="none"/>';
svgMarkup += '<path d="'+fg.fill+'" fill="#fff" shape-rendering="crispEdges"/>';
svgMarkup += '<path d="'+fg.whiteFill+'" fill="#fff" fill-rule="evenodd" shape-rendering="crispEdges"/>';
svgMarkup += '<path d="'+fg.white+'" stroke="#fff" fill="none"/>';
svgMarkup += '<path d="'+fg.black+'" stroke="#222" fill="none"/>';
svgMarkup += '<path d="'+fg.slash+'" stroke="#000" stroke-width="1.800" fill="none"/>';
document.getElementById("stitches").innerHTML = svgMarkup;

// Thread palette of the dialog.
var palette = [
[["922","#f2805f"],["3779","#f0b8ab"],["3024","#d2d2ca"],["ECRU","#f2ede1"],["3833","#f58a9d"],["3851","#48b08f"],["150","#b3385a"],["","#7ea888"]],
[["921","#ee6757"],["758","#f4b1a2"],["3023","#c5c6be"],["B5200","#ffffff","used"],["3832","#fc6c8b"],["3850","#1c8f6c"],["151","#fdadbd"],["","#c4e0b0"]],
[["920","#d46b5b"],["3778","#e99790"],["3022","#9fa293"],["BLANC","#fcfcf6","picked"],["3831","#d62a51"],["3852","#d99e25"],["152","#efa3a3"],["","#ecdc90"]],
[["919","#c65c52"],["356","#d47c7a"],["3787","#75766a"],["762","#e8e3ef"],["3836","#e69dd5"],["3855","#fad392"],["153","#f8bffb"],["","#c4c464"]],
[["918","#a9452c"],["3830","#e05f65"],["3021","#4a4a44","used"],["415","#d7d6e0"],["3835","#d482b3"],["3854","#fdaa72"],["154","#6b0f45"],["","#dc9058"]],
[["402","#fda587"],["355","#af3246"],["822","#f0e9e0"],["318","#c8c4d4"],["3834","#994270"],["3853","#f67a38"],["155","#ae7fc8"],["","#d6cde6"]],
[["3776","#e38460"],["3777","#a32023"],["644","#e2e0cb"],["414","#9b8db0"],["3837","#a344a8"],["3856","#feb28f"],["156","#9ca4e8"],["","#b4b0d8"]],
[["301","#dc735f"],["712","#fffcf0"],["642","#bbb59d"],["317","#6d6d80"],["3840","#b2cce8"],["3859","#e28c9a"],["157","#b6c9f8"],["","#328660"]],
[["400","#b9594f"],["739","#f7e8d9"],["640","#8e8a74"],["413","#564c6e"],["3839","#888ee0"],["3858","#b46074"],["158","#5f4f98"],["","#feac48"]],
[["300","#844528"],["738","#f8d6b4"],["3790","#8e7562"],["3799","#55555a"],["3838","#7069c4"],["3857","#8a3a54"],["159","#c3b9f0"],["","#c02058"]],
[["3827","#ffc298"],["437","#e8ba9c"],["3033","#d4d0c6"],["310","#000000","used"],["3841","#dcf0f0"],["3861","#c6929e"],["160","#aba7e8"],["","#885454"]],
[["977","#f0b07a"],["436","#d8a080"],["3782","#bdb6a2"],["","#fafafa"],["3842","#2a5880"],["3860","#a06c7a"],["161","#8878c8"],["","#503c78"]]
];
var cellsHtml = "";
palette.forEach(function (row) {
  row.forEach(function (p) {
    cellsHtml += '<div class="cell'+(p[2] ? " "+p[2] : "")+'"><i style="background:'+p[1]+'"></i>'+p[0]+'</div>';
  });
});
document.getElementById("palCells").innerHTML = cellsHtml;
var head = "";
for (var h = 14; h <= 21; h++) head += '<span class="pal-col">'+h+'</span>';
document.getElementById("palHead").innerHTML = head + '<i class="pal-tick pal-tick-a"></i><i class="pal-tick pal-tick-b"></i>';
var lab = "";
for (var l = 1; l <= 12; l++) {
  var cls = l === 1 ? " t0" : l === 5 ? " t5" : l === 10 ? " t10" : "";
  lab += '<div class="pal-rows-lab'+cls+'">'+l+'</div>';
}
document.getElementById("palRows").innerHTML = lab;
```
